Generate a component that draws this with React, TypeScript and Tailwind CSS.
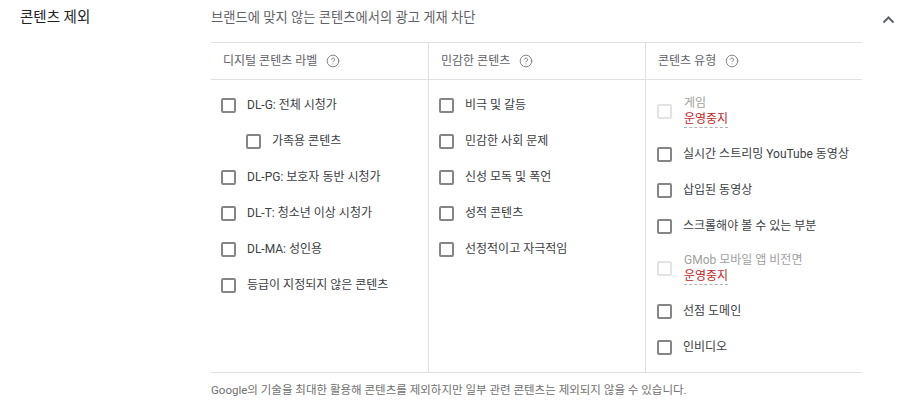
import { CircleHelp } from 'lucide-react';

type Item = { label: string; indent?: boolean; disabled?: boolean };

const digital: Item[] = [
  { label: 'DL-G: 전체 시청가' },
  { label: '가족용 콘텐츠', indent: true },
  { label: 'DL-PG: 보호자 동반 시청가' },
  { label: 'DL-T: 청소년 이상 시청가' },
  { label: 'DL-MA: 성인용' },
  { label: '등급이 지정되지 않은 콘텐츠' },
];

const sensitive: Item[] = [
  { label: '비극 및 갈등' },
  { label: '민감한 사회 문제' },
  { label: '신성 모독 및 폭언' },
  { label: '성적 콘텐츠' },
  { label: '선정적이고 자극적임' },
];

const types: Item[] = [
  { label: '게임', disabled: true },
  { label: '실시간 스트리밍 YouTube 동영상' },
  { label: '삽입된 동영상' },
  { label: '스크롤해야 볼 수 있는 부분' },
  { label: 'GMob 모바일 앱 비전면', disabled: true },
  { label: '선점 도메인' },
  { label: '인비디오' },
];

function Box({ disabled }: { disabled?: boolean }) {
  return (
    <span
      className={`box-border h-[15px] w-[15px] shrink-0 rounded-[2px] border-2 ${
        disabled ? 'border-[#e3e3e3]' : 'border-[#858585]'
      }`}
    />
  );
}

function Row({ item }: { item: Item }) {
  if (item.disabled) {
    return (
      <div className="flex h-[49px] items-center gap-[12px]">
        <Box disabled />
        <div className="flex flex-col text-[12px] leading-[17px]">
          <span className="text-[#a0a0a0]">{item.label}</span>
          <span className="self-start border-b border-dashed border-[#b0b0b0] leading-[15px] text-[#c5221f]">운영중지</span>
        </div>
      </div>
    );
  }
  return (
    <div className={`flex h-[36px] items-center gap-[11px] ${item.indent ? 'pl-[25px]' : ''}`}>
      <Box />
      <span className="text-[12px] text-[#3c4043]">{item.label}</span>
    </div>
  );
}

function Header({ title }: { title: string }) {
  return (
    <div className="flex h-[36px] items-center gap-[9px] pl-[12px] text-[12px] text-[#5f6368]">
      <span>{title}</span>
      <CircleHelp size={14} strokeWidth={1.5} className="text-[#757575]" />
    </div>
  );
}

export default function App() {
  const cols = [
    { title: '디지털 콘텐츠 라벨', items: digital },
    { title: '민감한 콘텐츠', items: sensitive },
    { title: '콘텐츠 유형', items: types },
  ];

  return (
    <div className="flex h-[407px] w-[912px] bg-white font-['Roboto','Noto_Sans_CJK_KR',sans-serif]">
      <div className="w-[211px] pl-[20px] pt-[8px] text-[14.5px] leading-[20px] text-[#202124]">콘텐츠 제외</div>

      <div className="w-[651px]">
        <div className="h-[42px] pt-[8px] text-[13.3px] leading-[20px] text-[#5f6368]">
          브랜드에 맞지 않는 콘텐츠에서의 광고 게재 차단
        </div>
        <div className="grid grid-cols-3 border-y border-[#e0e0e0]">
          {cols.map((c, i) => (
            <div key={c.title} className={i > 0 ? 'border-l border-[#e0e0e0]' : ''}>
              <div className="border-b border-[#e0e0e0]">
                <Header title={c.title} />
              </div>
              <div className={`pb-[7px] pt-[7px] ${i === 2 ? 'pl-[11px]' : 'pl-[10px]'}`}>
                {c.items.map((it) => (
                  <Row key={it.label} item={it} />
                ))}
              </div>
            </div>
          ))}
        </div>
        <div className="pt-[10px] text-[11.5px] leading-[14px] text-[#707070]">
          Google의 기술을 최대한 활용해 콘텐츠를 제외하지만 일부 관련 콘텐츠는 제외되지 않을 수 있습니다.
        </div>
      </div>

      <div className="flex flex-1 justify-center pt-[15px] pl-[1px]">
        <svg width="13" height="9" viewBox="0 0 13 9" className="ml-[1px]">
          <polyline points="1.5,7.5 6.5,2.5 11.5,7.5" fill="none" stroke="#5f6368" strokeWidth="2" />
        </svg>
      </div>
    </div>
  );
}
